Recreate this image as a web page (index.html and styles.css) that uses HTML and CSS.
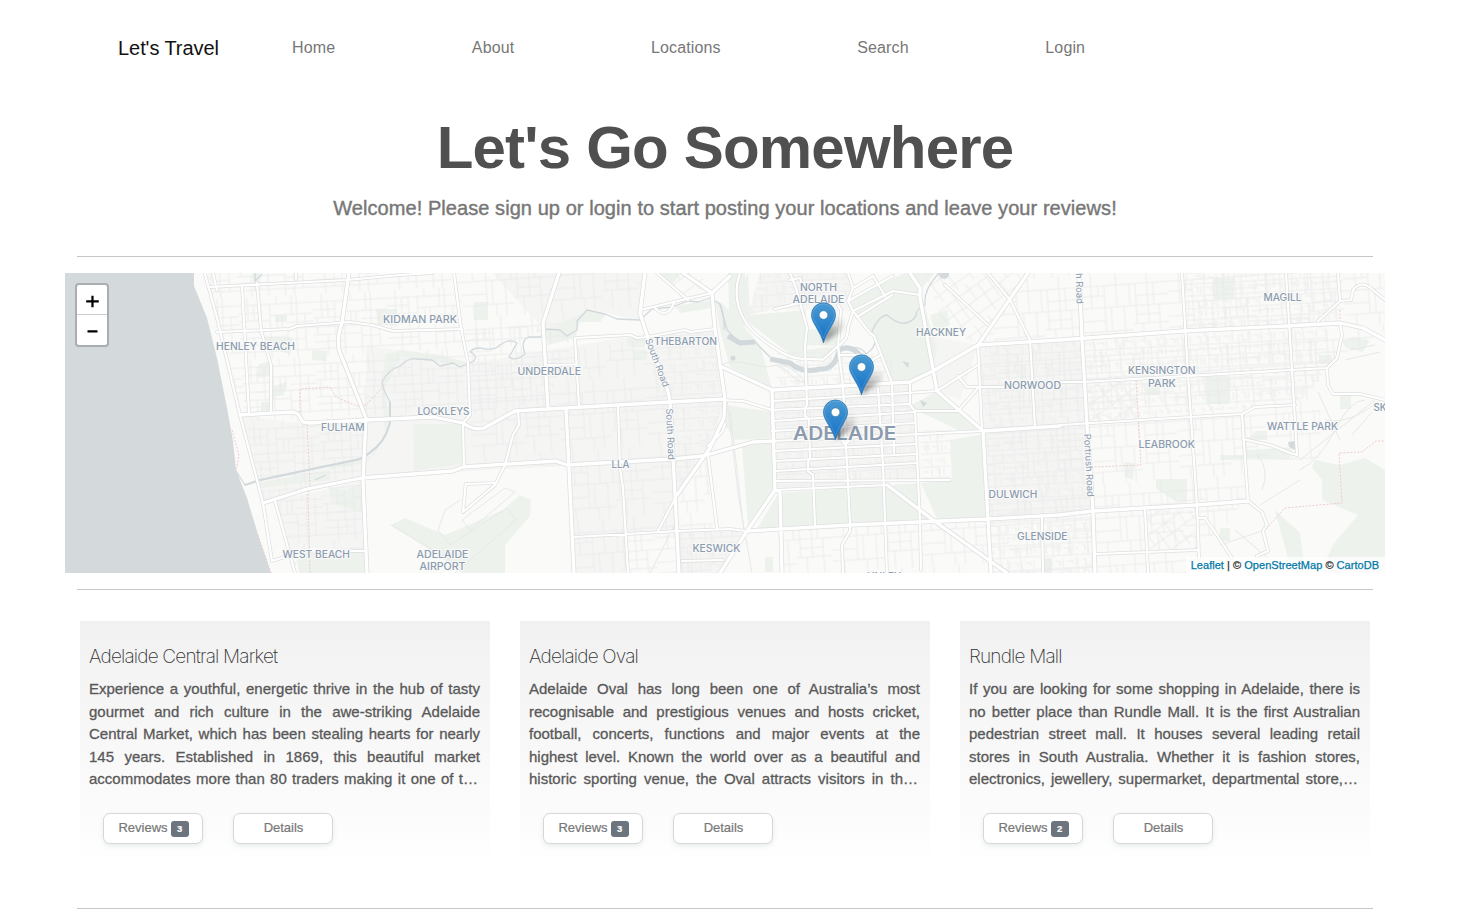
FILE: index.html
```html
<!DOCTYPE html>
<html lang="en">
<head>
<meta charset="utf-8">
<title>Let's Travel</title>
<link rel="stylesheet" href="styles.css">
</head>
<body>
<nav class="navbar">
  <a class="brand">Let's Travel</a>
  <ul class="nav-list">
    <li>Home</li><li>About</li><li>Locations</li><li>Search</li><li>Login</li>
  </ul>
</nav>
<main class="container">
  <header class="hero">
    <h1>Let's Go Somewhere</h1>
    <p>Welcome! Please sign up or login to start posting your locations and leave your reviews!</p>
  </header>
  <hr>
  <section class="map">
    <svg class="tiles" viewBox="65 273 1320 300" width="1320" height="300">
      <defs>
        <pattern id="streets-a" width="74" height="62" patternUnits="userSpaceOnUse" patternTransform="rotate(-3)">
          <path class="minor" d="M0 8H74M0 16H22M0 24H31M31 19H74M48 27H74M0 41H48M0 33H22M14 33H74M0 55H74M0 48H31M48 44H66M9 0V24M4 24V41M15 8V24M22 8V41M31 8V62M38 19V33M43 19V33M48 33V62M53 0V19M58 0V33M66 19V55M14 41V62M23 41V55M38 0V8M57 33V62"/>
        </pattern>
        <pattern id="streets-b" width="88" height="70" patternUnits="userSpaceOnUse" patternTransform="rotate(-4)">
          <path class="minor" d="M0 12H88M0 22H25M0 34H88M0 58H52M52 52H88M12 0V34M19 12V22M25 12V58M37 0V34M31 34V58M44 34V70M50 12V34M56 12V52M68 0V52M79 34V70M74 12V34M11 58V70M34 58V70M62 52V70M0 47H25M56 24H88M56 43H79"/>
        </pattern>
        <pattern id="streets-c" width="42" height="36" patternUnits="userSpaceOnUse" patternTransform="rotate(-3)">
          <path class="lots" d="M2 3h3v6h5M13 2v7M16 4h5v4M24 2v8M28 4h6v3M37 2v7M3 14h5v4M12 13v6M16 16h5M24 13v7M28 14h4v5M36 13v6M2 25h3v6M8 24v8M13 26h5v4M22 24v6M25 27h6v4M35 24v8M39 26v4"/>
          <path class="minor" d="M0 11H42M0 22H42M0 34H42M11 0V11M31 11V34M20 22V34"/>
        </pattern>
        <pattern id="streets-d" width="38" height="38" patternUnits="userSpaceOnUse" patternTransform="rotate(-36)">
          <path class="minor" d="M0 6H38M0 18H38M0 31H38M6 0V18M16 6V38M27 0V31M35 18V38"/>
        </pattern>
        <g id="minor-roads">
          <path d="M204.700 273L217 318L240 415L263 503L272 561L288 556M213 273L217 290M210 287L347 280L400 275L433 273M242 285L249 413M257 283L261 330L271 365L271 413M217 332L290 329L297 326L350 322L372 325L393 331L462 329M275 501L295 573M350 551H366M296 273V279"/>
          <path d="M454 273L461 328L468 363L470 415L463 423L464 467M575 338L630 335L637 338L647 337L685 330L690 332L715 329M575 338L579 406M548 365L575 364.500M618 405L620 468L623 488L628 573M518 411L519 425L513 435L505 465L495 485L463 512L465.700 484L495 483M575 537L678 531L730 529L746 531M640 310L682 300L712 293M657 273L688 300M655 308Q667 320 674 303M724 418L710 448L677 495L658 531M725 424L722 432L708 446M708 455L717 528M682 561L723 560"/>
          <path d="M740 273C734 290 736 306 745 321C750 330 760 338 770 345C780 352 790 358 800 358.700L823 359.700L838 346C847 340 848 334 848 328L853 311L848 301L853 288L848 273M853 288L873 276L885 296M853 311L893 291L920 295M857 317L892 295M848 301L893 276M775 309L800 303M790 273L796 288L807 328L805 346L807 405L805 408V416L809 419L810 458L808 462V471L813 475L815 525M838 305L841 310L838 346L843 386L850 523L850 531L842 545L843 573M790 280L800 278L804 290M853 311L870 333L874 336L892 383L894 453M878 388L883 465L887 573M910 382V405L915 411L920 523L921 570M840 355L863 355L870 361L881 355M915 411H958L978 388M907 393L937 391L978 365M958 376L967 387H1003M945 285L988 325"/>
          <path d="M720 400L743 401L772 410M772 401L907 393M772 410L910 404M772 421L915 412M772 431L915 423M774 441L983 431M774 451L915 444M774 461L916 454M775 471L916 463M775 481L950 480M775 490L887 485M842 440L845 445L850 440"/>
          <path d="M988 273L1010 300L1030 340L1035 428M978 345L982 431M1042 518L1043 573M1062 382H1083L1290 370L1327 368M1182 273L1188 375L1197 505L1199 558M1286 273L1292 370L1297 455L1290 453L1270 445L1243 439M1242 414L1248 501L1262 512L1267 525L1263 531L1268 551L1257 556M1338 273L1340 301M1340 323L1342 335L1337 358L1327 368L1328 385L1333 394L1360 394L1385 400M1318 321L1327 313L1340 301L1351 300L1353 290Q1362 279 1373 290L1385 300M1145 510L1148 573M1097 554L1198 550M1198 518H1205L1217 535L1232 558M1060 425L1190 417L1242 414L1255 407L1295 405"/>
        </g>
        <g id="major-roads">
          <path d="M349 273L342 323Q337 335 339 350L366 418L363 481L367 573M240 415L293 412L298 414L303 422L310 423L366 420L433 417L463 423Q474 431 484 428L515 411L548 409L670 402L725 399M263 503L307 489L362 478L400 475L453 471L463 467L556 461L567 465L673 459L703 456L753 442L775 441M559 273L543 323L548 409M645 273L640 313L647 335L668 391L670 402L674 475L679 573M566 409L569 468L574 573M683 273L712 293L730 276M712 293L715 329L725 399L724 418L710 448L677 495"/>
          <path d="M720 366L772 390L910 382L933 371L978 345L1028 273M772 390L775 490L780 492L782 573M720 573L747 531L775 490M747 531L850 525L987 519L1060 515L1093 511L1197 505L1248 501M978 345L1060 340L1183 331L1287 326L1340 323L1363 328L1385 340M910 273L920 288L920 298L937 391L983 431L991 573M887 485L933 520L1007 573M983 431L1060 426M1079 273L1082 338L1087 425L1093 511L1095 573"/>
        </g>
        <linearGradient id="pin-fill" x1="0" y1="0" x2="0" y2="1">
          <stop offset="0" stop-color="#4a9bd3"/><stop offset="1" stop-color="#126fc6"/>
        </linearGradient>
        <linearGradient id="shade-fill" x1="0" y1="1" x2="0.5" y2="0">
          <stop offset="0" stop-color="#222" stop-opacity=".65"/><stop offset="1" stop-color="#555" stop-opacity=".1"/>
        </linearGradient>
        <filter id="soft" x="-50%" y="-50%" width="200%" height="200%"><feGaussianBlur stdDeviation="2"/></filter>
        <g id="pin">
          <path d="M12.500 40L17 22Q24 13 32 17Q36 24 27 31Z" fill="url(#shade-fill)" filter="url(#soft)"/>
          <path d="M12.500 40.500C11.500 36 8.500 30.500 5 24.500C2.500 20 .5 17 .5 12.500A12 12 0 0 1 24.500 12.500C24.500 17 22.500 20 20 24.500C16.500 30.500 13.500 36 12.500 40.500Z" fill="url(#pin-fill)" stroke="#2e7ab5" stroke-width=".8"/>
          <path d="M12.500 36C11 31 8.500 27 6 22.500C3.500 18.500 1.600 16 1.600 12.500A10.900 10.900 0 0 1 23.400 12.500C23.400 16 21.500 18.500 19 22.500C16.500 27 14 31 12.500 36Z" fill="none" stroke="#fff" stroke-opacity=".14"/>
          <circle cx="12.500" cy="12.700" r="4.300" fill="#fff" stroke="#2e6c97" stroke-width=".5"/>
        </g>
      </defs>
      <rect class="land" x="65" y="273" width="1320" height="300"/>
      <g class="suburb">
        <path d="M240 415L305 424L366 420L362 478L263 503ZM366 345L470 363L640 335L670 402L678 531L575 537L568 466L400 475L366 478ZM275 501L362 481L366 550L310 548L292 560ZM492 273H645L640 320L590 310L545 330Z"/>
        <path d="M647 335L715 330L725 399L708 455L677 490ZM772 390L910 382L920 480L775 490ZM987 431L1087 425L1093 511L989 518ZM575 537L627 534V573H575ZM678 531L746 531L720 573H679Z"/>
        <path d="M760 273H850L853 311L775 309L748 315ZM978 345L1083 338L1087 425L983 431ZM925 335L978 345L960 400L935 390Z"/>
      </g>
      <g class="park">
        <path d="M748 273L737 295L748 322L790 354L800 359L826 360L838 346L805 345L806 310L750 315ZM848 300L905 273H935L920 290L937 350L932 371L910 382H893L874 336L858 318ZM806 330L838 326V346L806 350ZM715 300L724 305L760 345L772 388L730 367L720 330ZM725 405L772 412L774 438L735 440L725 425ZM742 446L774 442L775 489L748 525ZM779 493L887 486L933 520L849 525L756 530ZM892 485L919 483L920 514ZM921 483L952 480L950 440L985 434L988 518L937 519ZM911 405L936 392L980 430L958 430L916 410ZM895 350L932 346L922 378H900Z"/>
        <path d="M391 525L405 518L445 535L503 510L520 495L531 500L530 516L505 545V573H462L430 550ZM413 424L462 424L463 464L414 471ZM328 486L345 490L362 483V513L335 504ZM296 552L366 552V573H299ZM474 302H488V320H474ZM376 309H397V326L378 325ZM259 364L270 361L270 376L257 378ZM273 386L287 382L284 395L273 397ZM261 402H270V411H261ZM312 350L328 351L326 361L312 360ZM275 315H287V322H275ZM265 337H292L290 354L270 349ZM252 273H258L260 290L254 292ZM385 355L400 350L440 355L466 362V367L438 362L400 357L384 390L390 420L375 455L330 465V480L260 488L258 483L366 463L385 435L382 395ZM545 330L590 310L606 315L600 322H580L575 338L548 345Z"/>
        <path d="M627 338H646L645 347H628ZM633 350h14v10h-14ZM660 273H682L672 284ZM675 306L712 300L712 308L680 313ZM728 273H745V350L730 340ZM1206 376H1229V404H1206ZM1156 479H1187V502H1176L1156 488ZM1213 278H1234V299H1213ZM1256 431H1267V440H1248ZM1246 450L1290 448V459L1220 460V455L1246 455ZM1319 355H1332V364H1319ZM1342 341L1355 337L1370 341L1362 352L1345 347ZM1315 460L1340 465L1365 458L1385 470V573H1320L1334 543L1358 515L1322 500L1322 480L1312 467ZM1275 510L1300 533L1305 573H1292ZM1220 528H1230V541H1220ZM1124 462L1134 463L1133 480L1125 477ZM1147 384H1160V395H1147ZM1340 395H1351V409H1340ZM930 315L947 310L950 325L935 331ZM1020 365h6v14h-6ZM765 557h8v15h-8ZM1043 558h9v15h-9Z"/>
      </g>
      <g>
        <path fill="url(#streets-a)" d="M204 273H450L461 330L540 325L575 338L545 405L463 415L366 418L362 478L263 503L240 415L217 332ZM275 501L362 481L366 550L310 548L292 570Z"/>
        <path fill="url(#streets-b)" d="M455 273H645L640 310L590 310L545 330L470 360ZM470 365L647 338L670 402L678 573H575L568 466H470ZM680 461L708 456L716 573H680ZM1030 273H1385V330L1320 370V460H1245V500L1190 573H991L984 431L978 345ZM783 530L990 519V573H783Z"/>
        <path fill="url(#streets-c)" d="M647 335L715 330L725 399L708 455L677 490ZM772 390L910 382L920 480L775 490ZM983 345L1087 339L1094 573H991ZM760 273H850L848 300L775 308L748 315ZM1085 340L1327 325V368L1297 405L1087 420ZM1183 273H1337V325L1185 330ZM679 531L746 531L720 573H680ZM777 350L892 355V383L777 386ZM921 430L952 430L950 478L921 480Z"/>
        <path fill="url(#streets-d)" d="M925 273H1028L978 344L945 330ZM1087 384L1135 381L1140 418L1088 422ZM1147 510H1196L1198 549H1149ZM655 273H700L710 290L690 300Z"/>
      </g>
      <g class="track">
        <path d="M391 525L450 560M455 573L516 520L507 508L450 545L438 530L445 510L460 500M470 530L515 492L505 488L462 520ZM720 366C735 355 760 370 772 366S790 380 805 383M727 399L739 500L752 573M772 366Q790 360 805 383M730 410L744 531M650 573L677 520M1258 455Q1270 470 1262 490M1300 470Q1320 460 1335 430T1365 400M1300 460L1375 400M1325 420Q1350 425 1380 400M1260 505L1300 480M1350 350L1375 345M1345 360L1380 352M1235 530L1270 560M1220 545L1265 530M1340 440L1318 392M1352 435L1372 412"/>
      </g>
      <g class="river">
        <path d="M236 471L245 485L260 480L360 459Q380 448 386 434L390 423V402Q383 390 382 382Q388 370 400 366Q410 357 416 359L432 360L440 366L453 363L460 367L474 361Q478 355 470 352Q475 346 485 349Q495 350 500 345Q510 338 517 343L509 357Q515 362 525 354Q520 340 529 337L541 337L545 329L560 330L567 336L577 330L577 321L587 310L605 314L617 319L640 320L652 309L672 307L688 301L698 302L710 298L720 304Q725 318 724 330"/>
        <path d="M720 304L727 330L738 341L755 342L770 357"/>
        <path d="M843 349Q860 344 866 354Q880 345 872 332Q878 316 887 315Q905 331 916 316Q916 309 925 305Q923 290 939 273M255 273V281L262 274M315 480L326 475"/>
        <path class="broad" d="M245 485L260 480L360 459Q380 448 386 434L390 423V402"/>
        <path class="wide" d="M728 336L740 343L755 342M770 359L790 363Q803 374 820 369Q835 370 839 350Q850 344 860 355"/>
        <path class="pond" d="M1288 442L1295 441V450L1289 447ZM902 361L909 363L908 368ZM920 400L927 403L923 407Z"/><circle class="pond" cx="733" cy="358" r="2.500"/><circle class="pond" cx="944" cy="274" r="5"/>
      </g>
      <path class="sea" d="M65 273H194V286L207 318L217 358L227 408L233 441L236 470L247 498L260 541L271 573H65Z"/>
      <path class="boundary" d="M300 412V389L330 387L336 397L357 406L366 405L382 388M307 424L310 485L308 495L310 573M232 430L239 455L236 471M258 535L271 573M1136 380L1141 465L1093 467M1340 310V324M1266 529L1285 508L1342 503L1339 453L1362 452L1376 441H1385"/>
      <use href="#minor-roads" class="casing"/>
      <use href="#major-roads" class="casing major"/>
      <use href="#minor-roads" class="lane"/>
      <use href="#major-roads" class="lane major"/>
      <g class="place">
        <text x="383" y="323" textLength="74" lengthAdjust="spacingAndGlyphs">KIDMAN PARK</text>
        <text x="216" y="349.500" textLength="79" lengthAdjust="spacingAndGlyphs">HENLEY BEACH</text>
        <text x="321" y="431" textLength="43.500" lengthAdjust="spacingAndGlyphs">FULHAM</text>
        <text x="282.500" y="557.500" textLength="67.500" lengthAdjust="spacingAndGlyphs">WEST BEACH</text>
        <text x="416.500" y="558" textLength="52" lengthAdjust="spacingAndGlyphs">ADELAIDE</text>
        <text x="419.500" y="570" textLength="46" lengthAdjust="spacingAndGlyphs">AIRPORT</text>
        <text x="417.500" y="414.500" textLength="52" lengthAdjust="spacingAndGlyphs">LOCKLEYS</text>
        <text x="517.500" y="375.300" textLength="63.500" lengthAdjust="spacingAndGlyphs">UNDERDALE</text>
        <text x="654" y="344.500" textLength="63" lengthAdjust="spacingAndGlyphs">THEBARTON</text>
        <text x="611.500" y="467.500" textLength="18" lengthAdjust="spacingAndGlyphs">LLA</text>
        <text x="692.500" y="552.300" textLength="48" lengthAdjust="spacingAndGlyphs">KESWICK</text>
        <text x="800" y="291" textLength="37" lengthAdjust="spacingAndGlyphs">NORTH</text>
        <text x="792.500" y="303.300" textLength="52" lengthAdjust="spacingAndGlyphs">ADELAIDE</text>
        <text x="916" y="335.500" textLength="50" lengthAdjust="spacingAndGlyphs">HACKNEY</text>
        <text x="1004" y="388.500" textLength="57" lengthAdjust="spacingAndGlyphs">NORWOOD</text>
        <text x="988.500" y="498.300" textLength="49" lengthAdjust="spacingAndGlyphs">DULWICH</text>
        <text x="1017" y="540.300" textLength="50.500" lengthAdjust="spacingAndGlyphs">GLENSIDE</text>
        <text x="1263.500" y="301.300" textLength="38" lengthAdjust="spacingAndGlyphs">MAGILL</text>
        <text x="1128" y="374.300" textLength="67.500" lengthAdjust="spacingAndGlyphs">KENSINGTON</text>
        <text x="1148" y="386.500" textLength="28" lengthAdjust="spacingAndGlyphs">PARK</text>
        <text x="1267" y="429.800" textLength="71" lengthAdjust="spacingAndGlyphs">WATTLE PARK</text>
        <text x="1138.500" y="448" textLength="56.500" lengthAdjust="spacingAndGlyphs">LEABROOK</text>
        <text x="1373.500" y="410.500">SK</text>
        <text x="867" y="579.500" textLength="34" lengthAdjust="spacingAndGlyphs">UNLEY</text>
        <text class="city" x="793" y="439.500" textLength="103.500" lengthAdjust="spacingAndGlyphs">ADELAIDE</text>
        <g class="road-name">
          <text transform="translate(645 340) rotate(69)" textLength="51" lengthAdjust="spacingAndGlyphs">South Road</text>
          <text transform="translate(666 408.500) rotate(87.500)" textLength="51.500" lengthAdjust="spacingAndGlyphs">South Road</text>
          <text transform="translate(1084 434) rotate(87)" textLength="63" lengthAdjust="spacingAndGlyphs">Portrush Road</text>
          <text transform="translate(1074.500 241) rotate(88)" textLength="63" lengthAdjust="spacingAndGlyphs">Portrush Road</text>
        </g>
      </g>
      <use href="#pin" x="811" y="302.300"/>
      <use href="#pin" x="849" y="354.300"/>
      <use href="#pin" x="823" y="399.500"/>
    </svg>
    <div class="zoom-control">
      <svg viewBox="0 0 30 30" width="30" height="30"><path d="M9 17H22M15.500 11V23"/></svg>
      <svg viewBox="0 0 30 30" width="30" height="30"><path d="M10.500 16.300H20.500"/></svg>
    </div>
    <div class="attribution"><a>Leaflet</a> | © <a>OpenStreetMap</a> © <a>CartoDB</a></div>
  </section>
  <hr>
  <section class="cards">
    <article class="card">
      <h2>Adelaide Central Market</h2>
      <p><span>Experience a youthful, energetic thrive in the hub of tasty</span> <span>gourmet and rich culture in the awe-striking Adelaide</span> <span>Central Market, which has been stealing hearts for nearly</span> <span>145 years. Established in 1869, this beautiful market</span> <span class="cut">accommodates more than 80 traders making it one of t…</span></p>
      <div class="actions"><a class="btn">Reviews <b>3</b></a><a class="btn">Details</a></div>
    </article>
    <article class="card">
      <h2>Adelaide Oval</h2>
      <p><span>Adelaide Oval has long been one of Australia’s most</span> <span>recognisable and prestigious venues and hosts cricket,</span> <span>football, concerts, functions and major events at the</span> <span>highest level. Known the world over as a beautiful and</span> <span class="cut">historic sporting venue, the Oval attracts visitors in th…</span></p>
      <div class="actions"><a class="btn">Reviews <b>3</b></a><a class="btn">Details</a></div>
    </article>
    <article class="card">
      <h2>Rundle Mall</h2>
      <p><span>If you are looking for some shopping in Adelaide, there is</span> <span>no better place than Rundle Mall. It is the first Australian</span> <span>pedestrian street mall. It houses several leading retail</span> <span>stores in South Australia. Whether it is fashion stores,</span> <span class="cut">electronics, jewellery, supermarket, departmental store,…</span></p>
      <div class="actions"><a class="btn">Reviews <b>2</b></a><a class="btn">Details</a></div>
    </article>
  </section>
  <hr>
</main>
</body>
</html>
```

FILE: styles.css
```css
* { box-sizing: border-box; }
body {
  margin: 0;
  height: 909px;
  overflow: hidden;
  background: #fff;
  color: #555;
  font-family: "Liberation Sans", Arial, sans-serif;
}
.navbar {
  display: flex;
  align-items: center;
  height: 96px;
  padding-left: 118px;
}
.brand {
  width: 174px;
  font-size: 20px;
  letter-spacing: -0.06px;
  color: #111;
}
.nav-list {
  display: flex;
  gap: 136.700px;
  margin: 0;
  padding: 0;
  list-style: none;
  font-size: 16px;
  letter-spacing: 0.12px;
  color: #777;
}
.container { width: 1320px; margin-left: 65px; }
.hero { height: 160px; text-align: center; }
.hero h1 {
  margin: 0;
  padding-top: 18px;
  font-size: 60px;
  line-height: 68px;
  font-weight: 700;
  letter-spacing: -0.8px;
  color: #505050;
}
.hero p {
  margin: 0;
  padding-top: 15px;
  font-size: 20px;
  line-height: 23px;
  letter-spacing: 0.065px;
  color: #777;
  -webkit-text-stroke: 0.4px #777;
}
hr {
  height: 1px;
  margin: 0 12px;
  border: 0;
  background: #c6c6c6;
}
.map {
  position: relative;
  height: 300px;
  margin: 16px 0;
  overflow: hidden;
}
.tiles { display: block; }
.land { fill: #fafaf8; }
.suburb { fill: #f5f5f4; }
.park { fill: #edf2ed; }
.sea, .river .pond { fill: #d4dadc; stroke: none; }
.minor { fill: none; stroke: #e9eaea; stroke-width: 0.8; }
.lots { fill: none; stroke: #eeeeed; stroke-width: 1.2; }
.track { fill: none; stroke: #e7e9e8; stroke-width: 1; }
.river { fill: none; stroke: #d2d9dd; stroke-width: 1.3; stroke-linejoin: round; }
.river .broad { stroke-width: 2; }
.river .wide { stroke-width: 5; }
.boundary { fill: none; stroke: #ecc6c9; stroke-width: 0.9; stroke-dasharray: 2 1.5; }
.casing, .lane { fill: none; stroke-linecap: round; stroke-linejoin: round; }
.casing { stroke: #dedfdf; stroke-width: 3.6; }
.lane { stroke: #fff; stroke-width: 2.2; }
.casing.major { stroke-width: 4.8; }
.lane.major { stroke-width: 3.3; }
.place {
  font-family: Inter, "Open Sans", sans-serif;
  font-size: 9.700px;
  font-weight: 500;
  fill: #8c9cae;
  stroke: #fafafa;
  stroke-width: 2px;
  stroke-linejoin: round;
  paint-order: stroke;
}
.city { font-size: 18.500px; font-weight: 600; }
.road-name { font-size: 9.500px; font-weight: 400; }
.zoom-control {
  position: absolute;
  top: 10px;
  left: 10px;
  width: 34px;
  height: 64px;
  border: 2px solid #a9aeb0;
  border-radius: 4px;
  background: #fff;
  overflow: hidden;
}
.zoom-control svg {
  display: block;
  fill: none;
  stroke: #000;
  stroke-width: 2.300;
}
.zoom-control svg:first-child { border-bottom: 1px solid #ccc; }
.attribution {
  position: absolute;
  right: 0;
  bottom: 0;
  height: 16px;
  padding: 0 6px 0 5px;
  background: rgba(255, 255, 255, 0.7);
  font-size: 11px;
  line-height: 17px;
  letter-spacing: 0.03px;
  color: #333;
  -webkit-text-stroke: 0.25px;
}
.attribution a { color: #0078a8; }
.cards {
  display: flex;
  gap: 30px;
  height: 318px;
  padding: 31px 15px 0;
}
.card {
  width: 410px;
  height: 248px;
  padding: 24px 10px 0 9px;
  background: linear-gradient(#f1f1f1, #fff);
}
.card h2 {
  margin: 0;
  font-family: Inter, Roboto, sans-serif;
  font-size: 19px;
  line-height: 24px;
  font-weight: 200;
  letter-spacing: -0.82px;
  color: #333;
}
.card p {
  margin: 9px 0 0;
  font-size: 15px;
  line-height: 22.500px;
  color: #595959;
  -webkit-text-stroke: 0.3px #595959;
}
.card p span {
  display: block;
  text-align: justify;
  text-align-last: justify;
  white-space: nowrap;
}
.card .cut { width: 389px; }
.actions {
  display: flex;
  gap: 30px;
  margin: 22px 0 0 14px;
}
.btn {
  display: flex;
  align-items: center;
  justify-content: center;
  gap: 3px;
  width: 100px;
  height: 31px;
  padding: 0 0 1px 1px;
  border: 1px solid #d5d8d8;
  border-radius: 7px;
  background: #fff;
  box-shadow: 0 2px 5px rgba(120, 150, 150, 0.16);
  font-size: 13px;
  color: #777;
  -webkit-text-stroke: 0.2px #777;
}
.btn b {
  width: 18px;
  height: 16px;
  margin-top: 2px;
  border-radius: 3px;
  background: #6c757d;
  color: #fff;
  font-size: 9.500px;
  line-height: 15px;
  text-align: center;
  -webkit-text-stroke: 0.2px #fff;
}
```
